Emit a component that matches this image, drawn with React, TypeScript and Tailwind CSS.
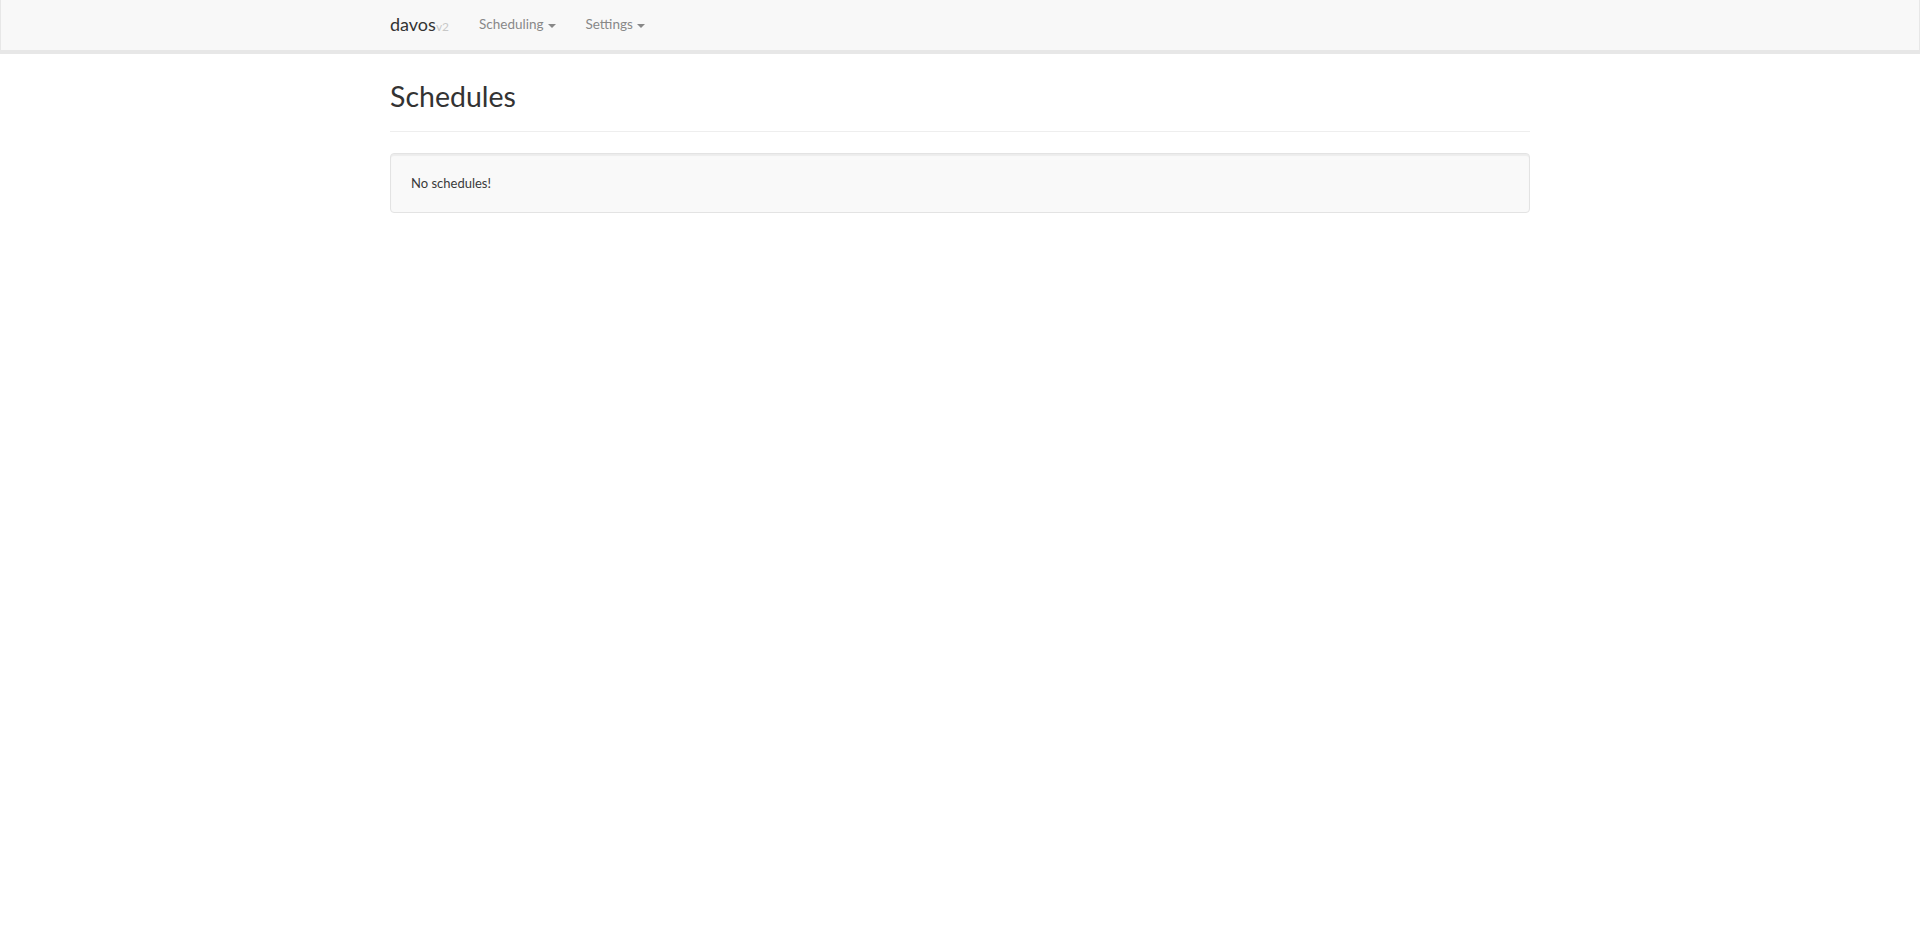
export default function App() {
  return (
    <div className="min-h-screen bg-white font-['Lato',sans-serif] text-[14px] text-[#333]">
      <nav className="h-[54px] border-x border-b-4 border-[#e7e7e7] bg-[#f8f8f8]">
        <div className="mx-auto flex h-[49px] w-[1140px] items-center">
          <a className="flex items-baseline pr-[15px]">
            <span className="text-[18px] text-[#333]">davos</span>
            <span className="text-[12px] text-[#c8c8c8]">v2</span>
          </a>
          <a className="flex items-center px-[15px] text-[13.5px] text-[#888]">
            Scheduling
            <span className="ml-[4px] mt-[2px] inline-block h-0 w-0 border-x-4 border-t-4 border-x-transparent border-t-[#888]" />
          </a>
          <a className="flex items-center px-[15px] text-[13.5px] text-[#888]">
            Settings
            <span className="ml-[4px] mt-[2px] inline-block h-0 w-0 border-x-4 border-t-4 border-x-transparent border-t-[#888]" />
          </a>
        </div>
      </nav>

      <main className="mx-auto w-[1140px]">
        <div className="mt-[26px] border-b border-[#eee] pb-[18px]">
          <h1 className="text-[28.5px] leading-[33px] text-[#333]">Schedules</h1>
        </div>
        <div className="mt-[21px] rounded-[4px] border border-[#e3e3e3] bg-[#f9f9f9] px-[20px] py-[19px] text-[13px] leading-[20px] text-[#3a3a3a] shadow-[inset_0_2px_1px_rgba(0,0,0,0.05)]">
          No schedules!
        </div>
      </main>
    </div>
  );
}
